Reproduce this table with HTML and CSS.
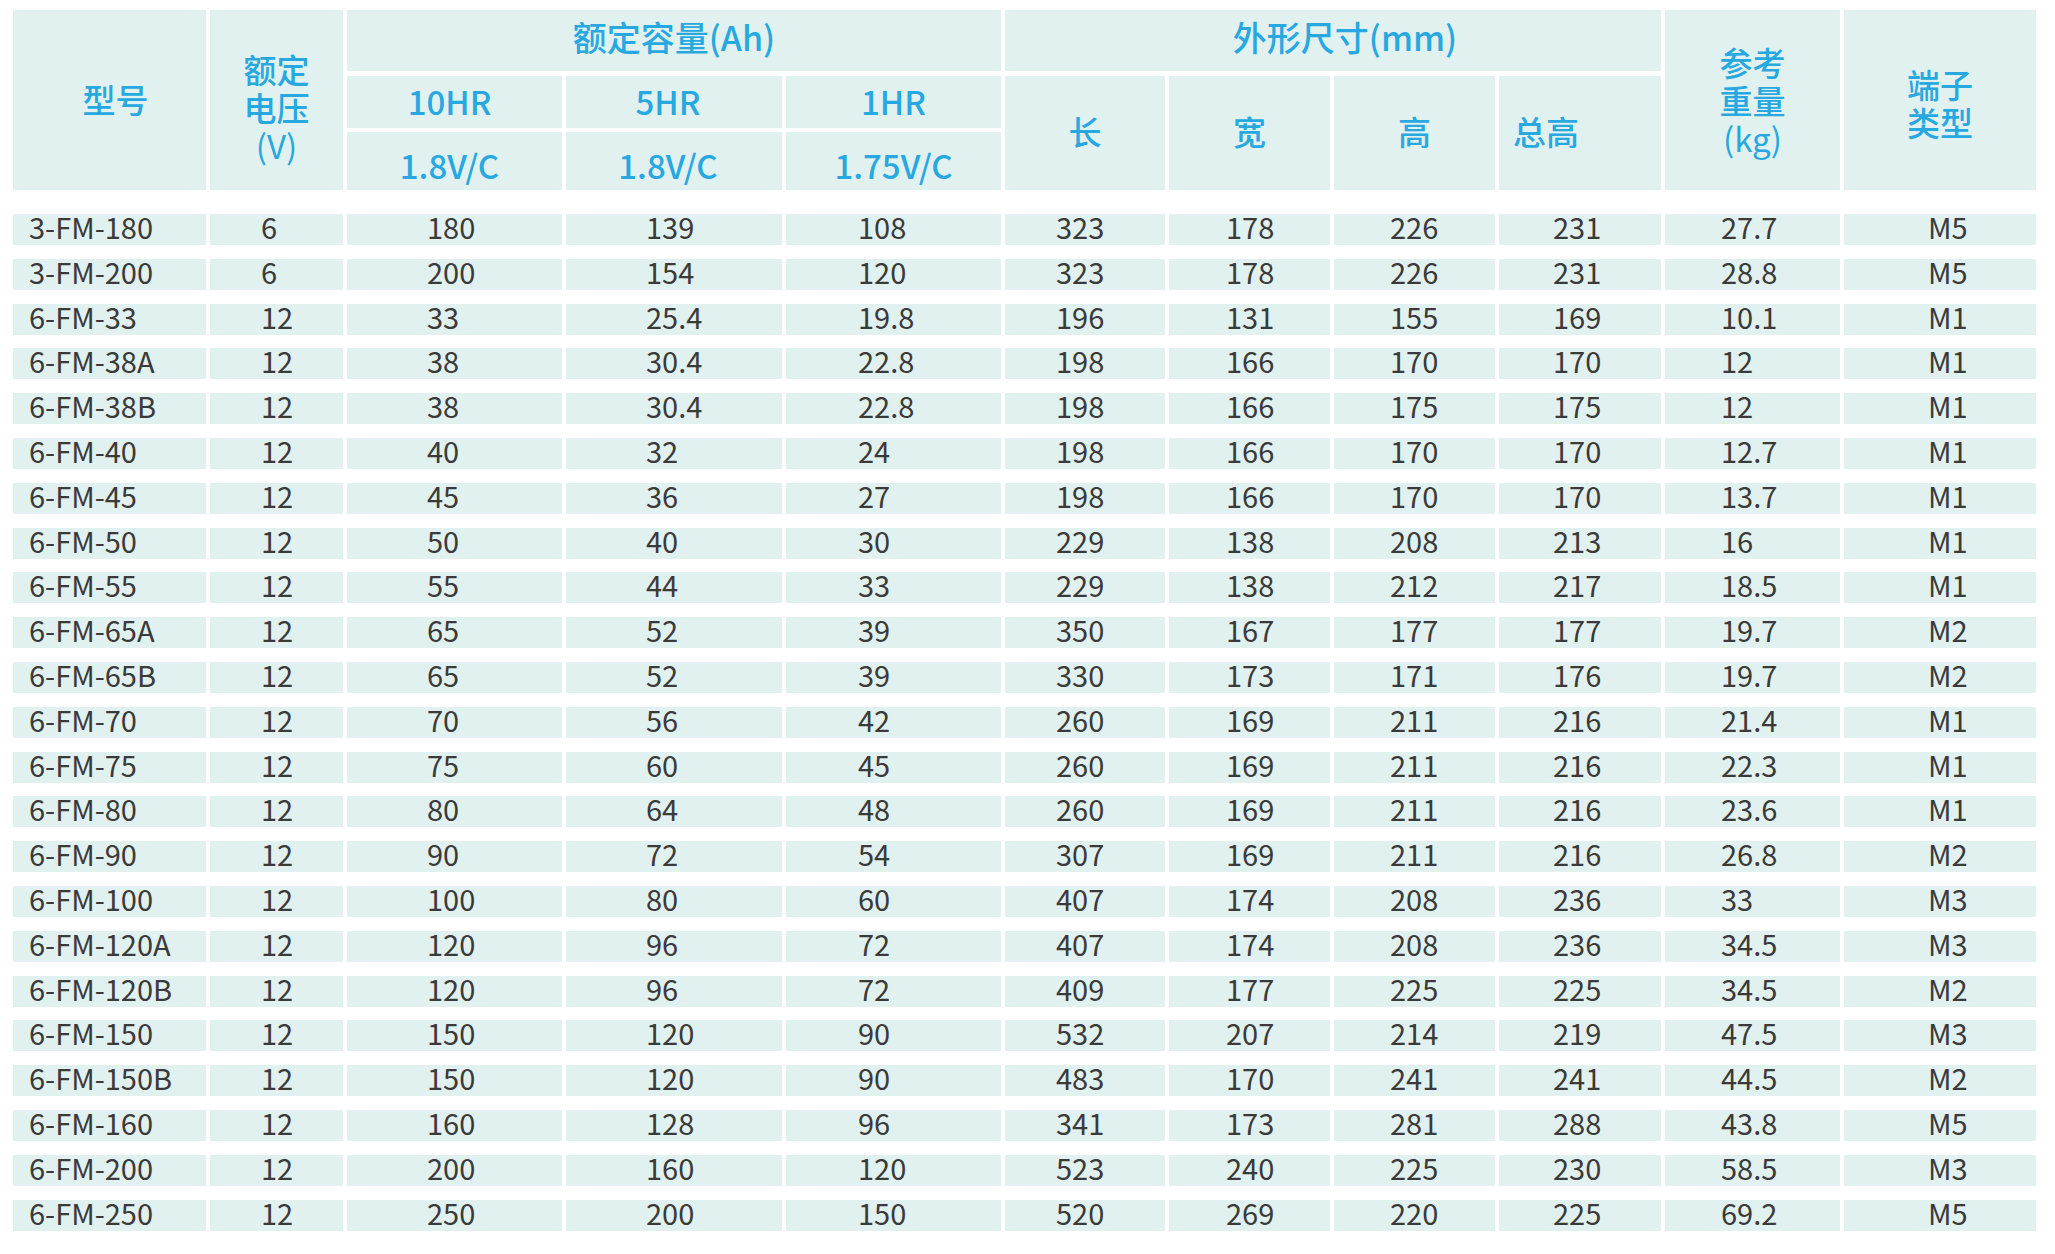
FILE: index.html
```html
<!DOCTYPE html>
<html lang="zh">
<head>
<meta charset="utf-8">
<title>规格表</title>
<link rel="stylesheet" href="styles.css">
</head>
<body>
<div class="table">
  <div class="head">
    <div class="h h-model"><span>型号</span></div>
    <div class="h h-volt"><div>额定<br>电压<br><span class="paren">(V)</span></div></div>
    <div class="h h-cap"><span>额定容量(Ah)</span></div>
    <div class="h h-r2 c3"><span>10HR</span></div>
    <div class="h h-r2 c4"><span>5HR</span></div>
    <div class="h h-r2 c5"><span>1HR</span></div>
    <div class="h h-r3 c3"><span>1.8V/C</span></div>
    <div class="h h-r3 c4"><span>1.8V/C</span></div>
    <div class="h h-r3 c5"><span>1.75V/C</span></div>
    <div class="h h-dim"><span>外形尺寸(mm)</span></div>
    <div class="h h-d c6"><span>长</span></div>
    <div class="h h-d c7"><span>宽</span></div>
    <div class="h h-d c8"><span>高</span></div>
    <div class="h h-d c9 h-total"><span>总高</span></div>
    <div class="h h-weight"><div>参考<br>重量<br><span class="paren">(kg)</span></div></div>
    <div class="h h-term"><div>端子<br>类型</div></div>
  </div>
  <div class="body" id="body"></div>
</div>
<script src="app.js"></script>
</body>
</html>
```
FILE: app.js
```js
const rows = [
["3-FM-180","6","180","139","108","323","178","226","231","27.7","M5"],
["3-FM-200","6","200","154","120","323","178","226","231","28.8","M5"],
["6-FM-33","12","33","25.4","19.8","196","131","155","169","10.1","M1"],
["6-FM-38A","12","38","30.4","22.8","198","166","170","170","12","M1"],
["6-FM-38B","12","38","30.4","22.8","198","166","175","175","12","M1"],
["6-FM-40","12","40","32","24","198","166","170","170","12.7","M1"],
["6-FM-45","12","45","36","27","198","166","170","170","13.7","M1"],
["6-FM-50","12","50","40","30","229","138","208","213","16","M1"],
["6-FM-55","12","55","44","33","229","138","212","217","18.5","M1"],
["6-FM-65A","12","65","52","39","350","167","177","177","19.7","M2"],
["6-FM-65B","12","65","52","39","330","173","171","176","19.7","M2"],
["6-FM-70","12","70","56","42","260","169","211","216","21.4","M1"],
["6-FM-75","12","75","60","45","260","169","211","216","22.3","M1"],
["6-FM-80","12","80","64","48","260","169","211","216","23.6","M1"],
["6-FM-90","12","90","72","54","307","169","211","216","26.8","M2"],
["6-FM-100","12","100","80","60","407","174","208","236","33","M3"],
["6-FM-120A","12","120","96","72","407","174","208","236","34.5","M3"],
["6-FM-120B","12","120","96","72","409","177","225","225","34.5","M2"],
["6-FM-150","12","150","120","90","532","207","214","219","47.5","M3"],
["6-FM-150B","12","150","120","90","483","170","241","241","44.5","M2"],
["6-FM-160","12","160","128","96","341","173","281","288","43.8","M5"],
["6-FM-200","12","200","160","120","523","240","225","230","58.5","M3"],
["6-FM-250","12","250","200","150","520","269","220","225","69.2","M5"]
];
const body = document.getElementById('body');
rows.forEach(r => {
  const row = document.createElement('div');
  row.className = 'row';
  r.forEach(v => {
    const c = document.createElement('div');
    c.className = 'cell';
    c.textContent = v;
    row.appendChild(c);
  });
  body.appendChild(row);
});
```
FILE: styles.css
```css
html, body {
  margin: 0;
  padding: 0;
  background: #ffffff;
}
body {
  padding: 10px 0 0 13px;
  font-family: "Noto Sans CJK SC", "Noto Sans", sans-serif;
}
.table {
  width: 2023px;
}
.head {
  display: grid;
  grid-template-columns: 193px 133px 215px 216px 215px 160px 161px 161px 162px 175px 192px;
  grid-template-rows: 61px 52px 58px;
  column-gap: 4px;
  row-gap: 4.5px;
}
.h {
  background: #e1f1ef;
  color: #27a8e0;
  font-size: 33px;
  font-weight: 500;
  display: flex;
  align-items: center;
  justify-content: center;
  text-align: center;
  line-height: 38px;
}
.paren {
  font-weight: 400;
}
.h-model { grid-column: 1; grid-row: 1 / 4; padding-bottom: 2px; padding-left: 12px; }
.h-volt { grid-column: 2; grid-row: 1 / 4; padding-top: 14px; }
.h-cap { grid-column: 3 / 6; grid-row: 1; padding-bottom: 8px; font-size: 34px; }
.h-dim { grid-column: 6 / 10; grid-row: 1; padding-bottom: 8px; padding-left: 24px; font-size: 34px; }
.h-weight { grid-column: 10; grid-row: 1 / 4; }
.h-term { grid-column: 11; grid-row: 1 / 4; padding-top: 5px; }
.h-r2 { grid-row: 2; padding-bottom: 2px; }
.h-r3 { grid-row: 3; padding-top: 7px; }
.h-d { grid-row: 2 / 4; padding-bottom: 4px; }
.c3 { grid-column: 3; padding-right: 10px; }
.c4 { grid-column: 4; padding-right: 12px; }
.c5 { grid-column: 5; }
.c6 { grid-column: 6; }
.c7 { grid-column: 7; }
.c8 { grid-column: 8; }
.c9 { grid-column: 9; }
.h-total { justify-content: flex-start; padding-left: 14px; }

.body {
  margin-top: 24px;
  display: flex;
  flex-direction: column;
  gap: 13.8px;
}
.row {
  display: grid;
  grid-template-columns: 193px 133px 215px 216px 215px 160px 161px 161px 162px 175px 192px;
  column-gap: 4px;
  height: 31px;
}
.cell {
  background: #e1f1ef;
  color: #3a3a3a;
  font-size: 29px;
  line-height: 24px;
  white-space: nowrap;
}
.cell:nth-child(1) { padding-left: 16px; }
.cell:nth-child(2) { padding-left: 51px; }
.cell:nth-child(3) { padding-left: 80px; }
.cell:nth-child(4) { padding-left: 80px; }
.cell:nth-child(5) { padding-left: 72px; }
.cell:nth-child(6) { padding-left: 51px; }
.cell:nth-child(7) { padding-left: 57px; }
.cell:nth-child(8) { padding-left: 56px; }
.cell:nth-child(9) { padding-left: 54px; }
.cell:nth-child(10) { padding-left: 56px; }
.cell:nth-child(11) { padding-left: 84px; }
```
